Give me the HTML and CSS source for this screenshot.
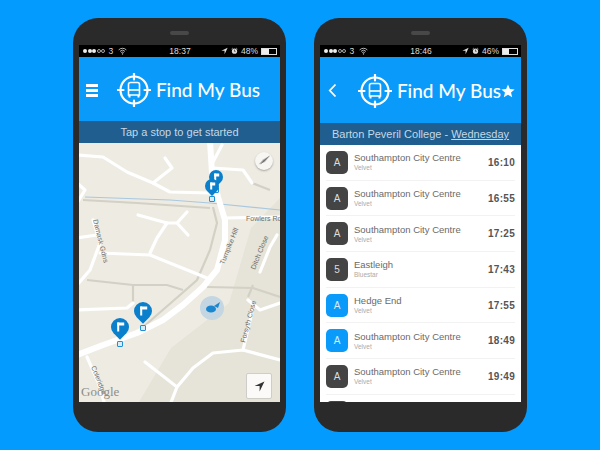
FILE: index.html
```html
<!DOCTYPE html>
<html lang="en">
<head>
  <meta charset="UTF-8">
  <meta name="viewport" content="width=device-width, initial-scale=1.0">
  <title>Find My Bus</title>
  <link rel="stylesheet" href="styles.css">
</head>
<body>
  <!-- Shared icons -->
  <svg class="icon-defs" width="0" height="0">
    <symbol id="logo" viewBox="0 0 34 34">
      <circle cx="17" cy="17" r="13.5" fill="none" stroke="#fff" stroke-width="2.2"/>
      <path d="M17 0.5v6M17 27.5v6M0.5 17h6M27.5 17h6" stroke="#fff" stroke-width="2.2" stroke-linecap="round"/>
      <path d="M11.5 11.5q0-2 2-2h7q2 0 2 2v10.5h-11z" fill="none" stroke="#fff" stroke-width="1.6"/>
      <path d="M11.5 17h11" stroke="#fff" stroke-width="1.6"/>
      <path d="M12.5 22v2.5M21.5 22v2.5" stroke="#fff" stroke-width="2"/>
    </symbol>
    <symbol id="wifi" viewBox="0 0 10 8">
      <path d="M0.7 2.8a6 6 0 0 1 8.6 0M2.2 4.4a4 4 0 0 1 5.6 0M3.6 5.9a2 2 0 0 1 2.8 0" fill="none" stroke="#ddd" stroke-width="0.9"/>
      <circle cx="5" cy="7.2" r="0.7" fill="#ddd"/>
    </symbol>
    <symbol id="arrow" viewBox="0 0 10 10">
      <path d="M9.5 0.5L0.5 4.6h4.6v4.9z" fill="currentColor"/>
    </symbol>
    <symbol id="alarm" viewBox="0 0 10 10">
      <circle cx="5" cy="5.3" r="3.7" fill="#ddd"/>
      <path d="M5 3v2.5h1.6" fill="none" stroke="#000" stroke-width="0.8"/>
      <path d="M0.8 2.4l1.8-1.6M9.2 2.4l-1.8-1.6" stroke="#ddd" stroke-width="1"/>
    </symbol>
  </svg>

  <!-- Map phone -->
  <div class="phone">
    <div class="speaker"></div>
    <div class="screen">
      <div class="status-bar">
        <div class="status-left">
          <span class="dot"></span><span class="dot"></span><span class="dot"></span><span class="dot dot-empty"></span><span class="dot dot-empty"></span>
          <span class="carrier">3</span>
          <svg class="wifi"><use href="#wifi"/></svg>
        </div>
        <div class="status-time">18:37</div>
        <div class="status-right">
          <svg class="status-icon"><use href="#arrow"/></svg>
          <svg class="status-icon"><use href="#alarm"/></svg>
          <span>48%</span>
          <span class="battery"><span class="battery-level level-48"></span></span>
        </div>
      </div>

      <div class="app-header">
        <div class="menu-icon"><span></span><span></span><span></span></div>
        <div class="brand">
          <svg class="logo"><use href="#logo"/></svg>
          <span class="brand-name">Find My Bus</span>
        </div>
      </div>
      <div class="sub-header">Tap a stop to get started</div>

      <div class="map">
        <svg class="map-art" viewBox="0 0 201 259" width="201" height="259">
          <rect width="201" height="259" fill="#eeebe3"/>
          <path d="M60 259L92 205L150 160L172 85L201 55V259z" fill="#e6e3d8"/>
          <!-- minor grey roads -->
          <g fill="none" stroke="#d3d0c6" stroke-width="2.2">
            <path d="M4 57L58 60L131 65"/>
            <path d="M134 64L138 80L131 107L118 137L101 152L63 185"/>
            <path d="M8 137L54 142L88 142L104 147"/>
            <path d="M54 142V160"/>
            <path d="M128 144L174 145L201 154"/>
            <path d="M174 142L169 154"/>
            <path d="M173 40L191 47"/>
          </g>
          <!-- stream -->
          <path d="M6 54L91 57L131 60L201 67" fill="none" stroke="#a9c8df" stroke-width="1.2"/>
          <!-- white roads -->
          <g fill="none" stroke="#fff" stroke-width="3.2" stroke-linejoin="round" stroke-linecap="round">
            <path d="M143 2L134 19"/>
            <path d="M134 25L164 27L173 40"/>
            <path d="M-2 12L24 14L48 29L74 40L91 49L131 50"/>
            <path d="M74 40L93 25L86 15"/>
            <path d="M-2 40L6 47L-2 60"/>
            <path d="M146 75L201 74"/>
            <path d="M59 72L88 80L98 80"/>
            <path d="M88 80L78 95L71 110"/>
            <path d="M108 69L98 80L109 92"/>
            <path d="M-2 95L18 92"/>
            <path d="M14 77L21 100L11 127L-2 142"/>
            <path d="M21 110L71 112L128 135"/>
            <path d="M198 92L191 104L181 129"/>
            <path d="M-2 167L48 165L54 160"/>
            <path d="M201 160L181 167L169 157"/>
            <path d="M174 165L164 207"/>
            <path d="M201 217L164 207L134 210L114 225L98 244L91 262"/>
            <path d="M66 219L98 244"/>
            <path d="M8 214L19 239L26 262"/>
          </g>
          <path d="M131 -2L133 30L139 54L146 77L146 97L138 127L124 144L104 162L84 177L58 190L24 202L-2 212" fill="none" stroke="#fff" stroke-width="6" stroke-linejoin="round"/>
          <!-- road names -->
          <g font-family="'Liberation Sans', sans-serif" font-size="7" fill="#6d6b66">
            <text x="167" y="78">Fowlers Rd</text>
            <text transform="translate(145 122) rotate(-68)">Turnpike Hill</text>
            <text transform="translate(14 77) rotate(76)">Damask Gdns</text>
            <text transform="translate(176 127) rotate(-68)">Ditch Close</text>
            <text transform="translate(166 200) rotate(-75)">Forsyth Close</text>
            <text transform="translate(12 224) rotate(68)">Coleridge</text>
          </g>
          <text x="2" y="253" font-family="'Liberation Serif', serif" font-size="13" fill="#8f8d88">Google</text>
          <!-- current location -->
          <circle cx="133" cy="165" r="12" fill="#c3d6e2"/>
          <ellipse cx="132" cy="166" rx="5" ry="3.6" fill="#1b86d0"/>
          <path d="M135 163L141 159L139 165z" fill="#1b86d0"/>
        </svg>

        <!-- bus stop pins -->
        <div class="stop stop-far"><div class="pin pin-small"><span class="flag"></span></div><span class="stop-mark"></span></div>
        <div class="stop stop-near"><div class="pin pin-small"><span class="flag"></span></div><span class="stop-mark"></span></div>
        <div class="stop stop-road"><div class="pin"><span class="flag"></span></div><span class="stop-mark"></span></div>
        <div class="stop stop-corner"><div class="pin"><span class="flag"></span></div><span class="stop-mark"></span></div>

        <div class="compass">
          <svg viewBox="0 0 18 18" width="18" height="18"><path d="M15 3.5L9 9.6L5 12.5L8.4 8.4z" fill="#333"/><path d="M15 3.5L8 7.5L3.5 12.5L10 10z" fill="#888" opacity="0.6"/></svg>
        </div>
        <div class="locate">
          <svg width="11" height="11"><use href="#arrow"/></svg>
        </div>
      </div>
    </div>
  </div>

  <!-- Timetable phone -->
  <div class="phone">
    <div class="speaker"></div>
    <div class="screen">
      <div class="status-bar">
        <div class="status-left">
          <span class="dot"></span><span class="dot"></span><span class="dot"></span><span class="dot dot-empty"></span><span class="dot dot-empty"></span>
          <span class="carrier">3</span>
          <svg class="wifi"><use href="#wifi"/></svg>
        </div>
        <div class="status-time">18:46</div>
        <div class="status-right">
          <svg class="status-icon"><use href="#arrow"/></svg>
          <svg class="status-icon"><use href="#alarm"/></svg>
          <span>46%</span>
          <span class="battery"><span class="battery-level level-46"></span></span>
        </div>
      </div>

      <div class="app-header app-header-tall">
        <svg class="back-icon" viewBox="0 0 9 15"><path d="M7.5 1.5L1.8 7.5L7.5 13.5" fill="none" stroke="#fff" stroke-width="1.8"/></svg>
        <div class="brand">
          <svg class="logo"><use href="#logo"/></svg>
          <span class="brand-name">Find My Bus</span>
        </div>
        <svg class="star-icon" viewBox="0 0 24 24"><path d="M12 1l3.2 7.6 8.2.7-6.2 5.4 1.9 8L12 18.4l-7.1 4.3 1.9-8L.6 9.3l8.2-.7z" fill="#fff"/></svg>
      </div>
      <div class="sub-header">Barton Peveril College - <u>Wednesday</u></div>

      <div class="departures">
        <div class="departure">
          <div class="route">A</div>
          <div class="departure-info"><div class="destination">Southampton City Centre</div><div class="operator">Velvet</div></div>
          <div class="departure-time">16:10</div>
        </div>
        <div class="departure">
          <div class="route">A</div>
          <div class="departure-info"><div class="destination">Southampton City Centre</div><div class="operator">Velvet</div></div>
          <div class="departure-time">16:55</div>
        </div>
        <div class="departure">
          <div class="route">A</div>
          <div class="departure-info"><div class="destination">Southampton City Centre</div><div class="operator">Velvet</div></div>
          <div class="departure-time">17:25</div>
        </div>
        <div class="departure">
          <div class="route">5</div>
          <div class="departure-info"><div class="destination">Eastleigh</div><div class="operator">Bluestar</div></div>
          <div class="departure-time">17:43</div>
        </div>
        <div class="departure">
          <div class="route route-live">A</div>
          <div class="departure-info"><div class="destination">Hedge End</div><div class="operator">Velvet</div></div>
          <div class="departure-time">17:55</div>
        </div>
        <div class="departure">
          <div class="route route-live">A</div>
          <div class="departure-info"><div class="destination">Southampton City Centre</div><div class="operator">Velvet</div></div>
          <div class="departure-time">18:49</div>
        </div>
        <div class="departure">
          <div class="route">A</div>
          <div class="departure-info"><div class="destination">Southampton City Centre</div><div class="operator">Velvet</div></div>
          <div class="departure-time">19:49</div>
        </div>
        <div class="departure">
          <div class="route">A</div>
          <div class="departure-info"><div class="destination">Southampton City Centre</div><div class="operator">Velvet</div></div>
          <div class="departure-time">20:49</div>
        </div>
      </div>
    </div>
  </div>
</body>
</html>
```

FILE: styles.css
```css
/* Reset */
*,
*::before,
*::after {
  box-sizing: border-box;
  margin: 0;
  padding: 0;
}

body {
  width: 600px;
  height: 450px;
  overflow: hidden;
  background-color: #049bff;
  font-family: "Liberation Sans", Arial, sans-serif;
  display: flex;
  gap: 28px;
  padding: 18px 0 0 73px;
}

.icon-defs {
  position: absolute;
}

/* Phone body */
.phone {
  width: 213px;
  height: 414px;
  background-color: #2a2a2a;
  border-radius: 25px;
  padding: 0 6px;
  display: flex;
  flex-direction: column;
}

.speaker {
  width: 19px;
  height: 4px;
  margin: 13px auto 10px;
  background-color: #484848;
  border-radius: 2px;
}

.screen {
  height: 357px;
  display: flex;
  flex-direction: column;
  overflow: hidden;
  background-color: #fff;
}

/* Status bar */
.status-bar {
  height: 12px;
  flex: none;
  background-color: #000;
  color: #ddd;
  font-size: 8.5px;
  display: grid;
  grid-template-columns: 1fr auto 1fr;
  align-items: center;
  padding: 0 3px 0 4px;
}

.status-left {
  display: flex;
  align-items: center;
  gap: 0.5px;
}

.dot {
  width: 4px;
  height: 4px;
  border-radius: 50%;
  background-color: #eee;
}

.dot-empty {
  background-color: transparent;
  border: 0.7px solid #aaa;
}

.carrier {
  margin: 0 4px 0 3px;
}

.wifi {
  width: 9px;
  height: 8px;
}

.status-right {
  display: flex;
  align-items: center;
  justify-content: flex-end;
  gap: 3px;
}

.status-icon {
  width: 7px;
  height: 8px;
  color: #ddd;
}

.battery {
  width: 16px;
  height: 7px;
  border: 1px solid #ddd;
  display: block;
}

.battery-level {
  display: block;
  height: 100%;
  background-color: #eee;
}

.level-48 {
  width: 48%;
}

.level-46 {
  width: 46%;
}

/* App header */
.app-header {
  height: 64px;
  flex: none;
  background-color: #0a9bfa;
  position: relative;
  display: flex;
  align-items: center;
  justify-content: center;
  padding-top: 1px;
}

.app-header-tall {
  height: 66px;
}

.menu-icon {
  position: absolute;
  left: 7px;
  top: 27px;
  width: 12px;
  display: flex;
  flex-direction: column;
  gap: 2.5px;
}

.menu-icon span {
  height: 2.5px;
  background-color: #fff;
}

.back-icon {
  position: absolute;
  left: 8px;
  top: 26px;
  width: 9px;
  height: 15px;
}

.star-icon {
  position: absolute;
  right: 6px;
  top: 27px;
  width: 14px;
  height: 14px;
}

.brand {
  display: flex;
  align-items: center;
  gap: 5px;
  margin-left: 18px;
}

.logo {
  width: 34px;
  height: 34px;
}

.brand-name {
  color: #fff;
  font-family: Lato, sans-serif;
  font-size: 19px;
  font-weight: 500;
}

/* Blue strip under the header */
.sub-header {
  height: 22px;
  flex: none;
  background-color: #1f5e8e;
  color: #c4d8e6;
  font-size: 11px;
  line-height: 22px;
  text-align: center;
}

/* Map */
.map {
  position: relative;
  flex: 1;
  overflow: hidden;
}

.map-art {
  display: block;
}

.stop {
  position: absolute;
  display: flex;
  flex-direction: column;
  align-items: center;
}

.stop-far {
  left: 130px;
  top: 27px;
}

.stop-near {
  left: 126px;
  top: 36px;
}

.stop-road {
  left: 55px;
  top: 159px;
}

.stop-corner {
  left: 32px;
  top: 175px;
}

.pin {
  width: 18px;
  height: 18px;
  background-color: #0a7fcb;
  border-radius: 50% 50% 50% 0;
  transform: rotate(-45deg);
  margin-bottom: 5px;
  display: flex;
  align-items: center;
  justify-content: center;
}

.pin-small {
  width: 14px;
  height: 14px;
  margin-bottom: 3px;
}

.flag {
  width: 7px;
  height: 9px;
  transform: rotate(45deg);
  border-left: 2px solid #fff;
  border-top: 3px solid #fff;
}

.pin-small .flag {
  width: 5px;
  height: 7px;
}

.stop-mark {
  width: 6px;
  height: 6px;
  background-color: #d8ebf7;
  border: 1px solid #1f8fd6;
  border-radius: 1px;
}

.compass {
  position: absolute;
  top: 9px;
  right: 7px;
  width: 18px;
  height: 18px;
  border-radius: 50%;
  background-color: #f7f6f3;
  box-shadow: 0 1px 2px rgba(0, 0, 0, 0.3);
}

.locate {
  position: absolute;
  right: 8px;
  bottom: 3px;
  width: 26px;
  height: 26px;
  background-color: #fbfaf8;
  border: 1px solid #cfcdc8;
  border-radius: 2px;
  color: #333;
  display: flex;
  align-items: center;
  justify-content: center;
}

/* Departure list */
.departures {
  flex: 1;
  overflow: hidden;
  padding: 0 6px;
}

.departure {
  height: 35.7px;
  flex: none;
  display: flex;
  align-items: center;
  border-bottom: 1px solid #f2f2f2;
}

.route {
  width: 22px;
  height: 23px;
  flex: none;
  background-color: #444;
  color: #ddd;
  font-size: 10px;
  border-radius: 5px;
  display: flex;
  align-items: center;
  justify-content: center;
}

.route-live {
  background-color: #0a9bfa;
  color: #d5edff;
}

.departure-info {
  flex: 1;
  margin-left: 6px;
}

.destination {
  color: #6a6a6a;
  font-size: 9.5px;
  line-height: 12px;
}

.operator {
  color: #aaa;
  font-size: 6.5px;
  line-height: 8px;
}

.departure-time {
  color: #555;
  font-size: 10px;
  font-weight: bold;
  letter-spacing: 0.3px;
}
```
